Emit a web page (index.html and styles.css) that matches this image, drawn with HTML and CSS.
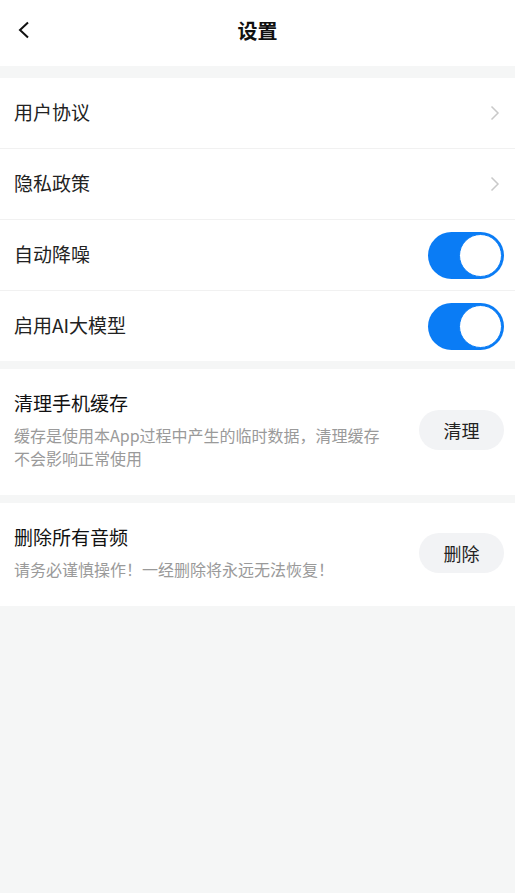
FILE: index.html
```html
<!DOCTYPE html>
<html lang="zh-CN">
<head>
  <meta charset="UTF-8" />
  <meta name="viewport" content="width=device-width, initial-scale=1.0"/>
  <title>设置</title>
  <link rel="stylesheet" href="styles.css">
</head>
<body>
  <header class="topbar">
    <a class="back" href="#">
      <svg width="14" height="18" viewBox="0 0 14 18"><path d="M11 1.5 L3 9 L11 16.5" fill="none" stroke="#111" stroke-width="2"/></svg>
    </a>
    <h1>设置</h1>
  </header>

  <section class="group">
    <a class="row" href="#">
      <span class="label">用户协议</span>
      <svg class="arrow" width="10" height="16" viewBox="0 0 10 16"><path d="M1.5 1.5 L8 8 L1.5 14.5" fill="none" stroke="#c9c9c9" stroke-width="1.5"/></svg>
    </a>
    <a class="row" href="#">
      <span class="label">隐私政策</span>
      <svg class="arrow" width="10" height="16" viewBox="0 0 10 16"><path d="M1.5 1.5 L8 8 L1.5 14.5" fill="none" stroke="#c9c9c9" stroke-width="1.5"/></svg>
    </a>
    <div class="row">
      <span class="label">自动降噪</span>
      <span class="switch on"><span class="knob"></span></span>
    </div>
    <div class="row">
      <span class="label">启用AI大模型</span>
      <span class="switch on"><span class="knob"></span></span>
    </div>
  </section>

  <section class="group action cache">
    <div class="info">
      <div class="title">清理手机缓存</div>
      <div class="desc">缓存是使用本App过程中产生的临时数据，清理缓存不会影响正常使用</div>
    </div>
    <button>清理</button>
  </section>

  <section class="group action">
    <div class="info">
      <div class="title">删除所有音频</div>
      <div class="desc">请务必谨慎操作！一经删除将永远无法恢复！</div>
    </div>
    <button>删除</button>
  </section>
</body>
</html>
```

FILE: styles.css
```css
body {
  font-family: "Noto Sans CJK SC", "Noto Sans", sans-serif;
  margin: 0;
  padding: 0;
  background: #f5f6f6;
  color: #222;
}

.topbar {
  background: #fff;
  height: 66px;
  box-sizing: border-box;
  padding-bottom: 6px;
  display: flex;
  align-items: center;
  justify-content: center;
  position: relative;
  margin-bottom: 12px;
}

.topbar h1 {
  margin: 0;
  font-size: 20px;
  font-weight: bold;
  color: #111;
}

.back {
  position: absolute;
  left: 17px;
  top: 21px;
  display: flex;
}

.group {
  background: #fff;
  margin-bottom: 8px;
}

.row {
  display: flex;
  align-items: center;
  justify-content: space-between;
  height: 70px;
  padding: 0 11px 0 14px;
  border-bottom: 1px solid #f1f1f1;
  text-decoration: none;
  color: #222;
}

.row:last-child {
  border-bottom: none;
}

.label {
  font-size: 19px;
  margin-top: -4px;
}

.arrow {
  margin-right: 4px;
}

.switch {
  width: 76px;
  height: 47px;
  border-radius: 24px;
  background: #0a7cf5;
  display: flex;
  align-items: center;
  justify-content: flex-end;
  box-sizing: border-box;
  padding-right: 2px;
}

.knob {
  width: 41px;
  height: 41px;
  border-radius: 50%;
  background: #fff;
  border: 1px solid #0a7cf5;
}

.action {
  display: flex;
  align-items: center;
  justify-content: space-between;
  padding: 21px 11px 25px 14px;
}

.info {
  width: 380px;
}

.title {
  font-size: 19px;
  color: #111;
  line-height: 26px;
  margin-bottom: 8px;
}

.desc {
  font-size: 16px;
  color: #9a9a9a;
  line-height: 23px;
}

button {
  font-family: inherit;
  width: 85px;
  height: 40px;
  border: none;
  border-radius: 20px;
  background: #f2f3f5;
  color: #222;
  font-size: 18px;
  cursor: pointer;
}
```
